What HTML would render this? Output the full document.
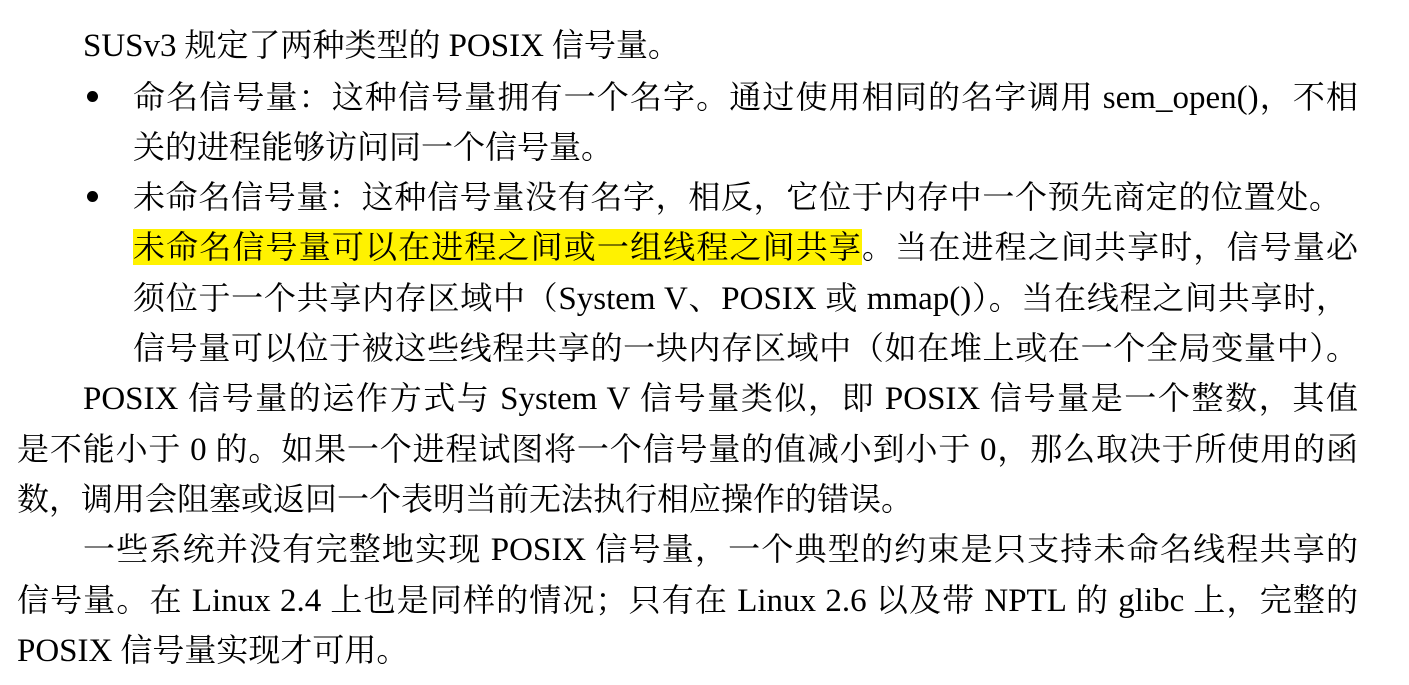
<!DOCTYPE html>
<html><head><meta charset="utf-8"><style>
html,body{margin:0;padding:0;background:#fff;}
body{width:1409px;height:685px;position:relative;overflow:hidden;font-family:"Liberation Serif","Noto Serif CJK SC",serif;font-size:32px;color:#000;}
.l{position:absolute;height:50px;line-height:50px;white-space:nowrap;}
.j{text-align:justify;text-align-last:justify;white-space:normal;}
.b{position:absolute;width:11px;height:11px;border-radius:50%;background:#000;left:87px;}
.h{background:#fff200;}
.e{font-size:33px;}
</style></head><body>
<div class="l" style="left:83px;top:20px;"><span class="e">SUSv3</span> 规定了两种类型的 <span class="e">POSIX</span> 信号量。</div>
<div class="b" style="top:91px;"></div>
<div class="l j" style="left:133px;width:1225px;top:72px;">命名信号量：这种信号量拥有一个名字。通过使用相同的名字调用 <span class="e">sem_open()</span>，不相</div>
<div class="l" style="left:133px;top:122px;">关的进程能够访问同一个信号量。</div>
<div class="b" style="top:191px;"></div>
<div class="l j" style="left:133px;width:1208px;top:172px;">未命名信号量：这种信号量没有名字，相反，它位于内存中一个预先商定的位置处。</div>
<div class="l j" style="left:133px;width:1225px;top:222px;"><span class="h">未命名信号量可以在进程之间或一组线程之间共享</span>。当在进程之间共享时，信号量必</div>
<div class="l j" style="left:133px;width:1215px;top:273px;">须位于一个共享内存区域中（<span class="e">System V</span>、<span class="e">POSIX</span> 或 <span class="e">mmap()</span>）。当在线程之间共享时，</div>
<div class="l j" style="left:133px;width:1225px;top:323px;">信号量可以位于被这些线程共享的一块内存区域中（如在堆上或在一个全局变量中）。</div>
<div class="l j" style="left:83px;width:1275px;top:373px;"><span class="e">POSIX</span> 信号量的运作方式与 <span class="e">System V</span> 信号量类似，即 <span class="e">POSIX</span> 信号量是一个整数，其值</div>
<div class="l j" style="left:17px;width:1341px;top:424px;">是不能小于 <span class="e">0</span> 的。如果一个进程试图将一个信号量的值减小到小于 <span class="e">0</span>，那么取决于所使用的函</div>
<div class="l" style="left:17px;top:474px;">数，调用会阻塞或返回一个表明当前无法执行相应操作的错误。</div>
<div class="l j" style="left:83px;width:1275px;top:524px;">一些系统并没有完整地实现 <span class="e">POSIX</span> 信号量，一个典型的约束是只支持未命名线程共享的</div>
<div class="l j" style="left:17px;width:1341px;top:575px;">信号量。在 <span class="e">Linux 2.4</span> 上也是同样的情况；只有在 <span class="e">Linux 2.6</span> 以及带 <span class="e">NPTL</span> 的 <span class="e">glibc</span> 上，完整的</div>
<div class="l" style="left:17px;top:625px;"><span class="e">POSIX</span> 信号量实现才可用。</div>
</body></html>
